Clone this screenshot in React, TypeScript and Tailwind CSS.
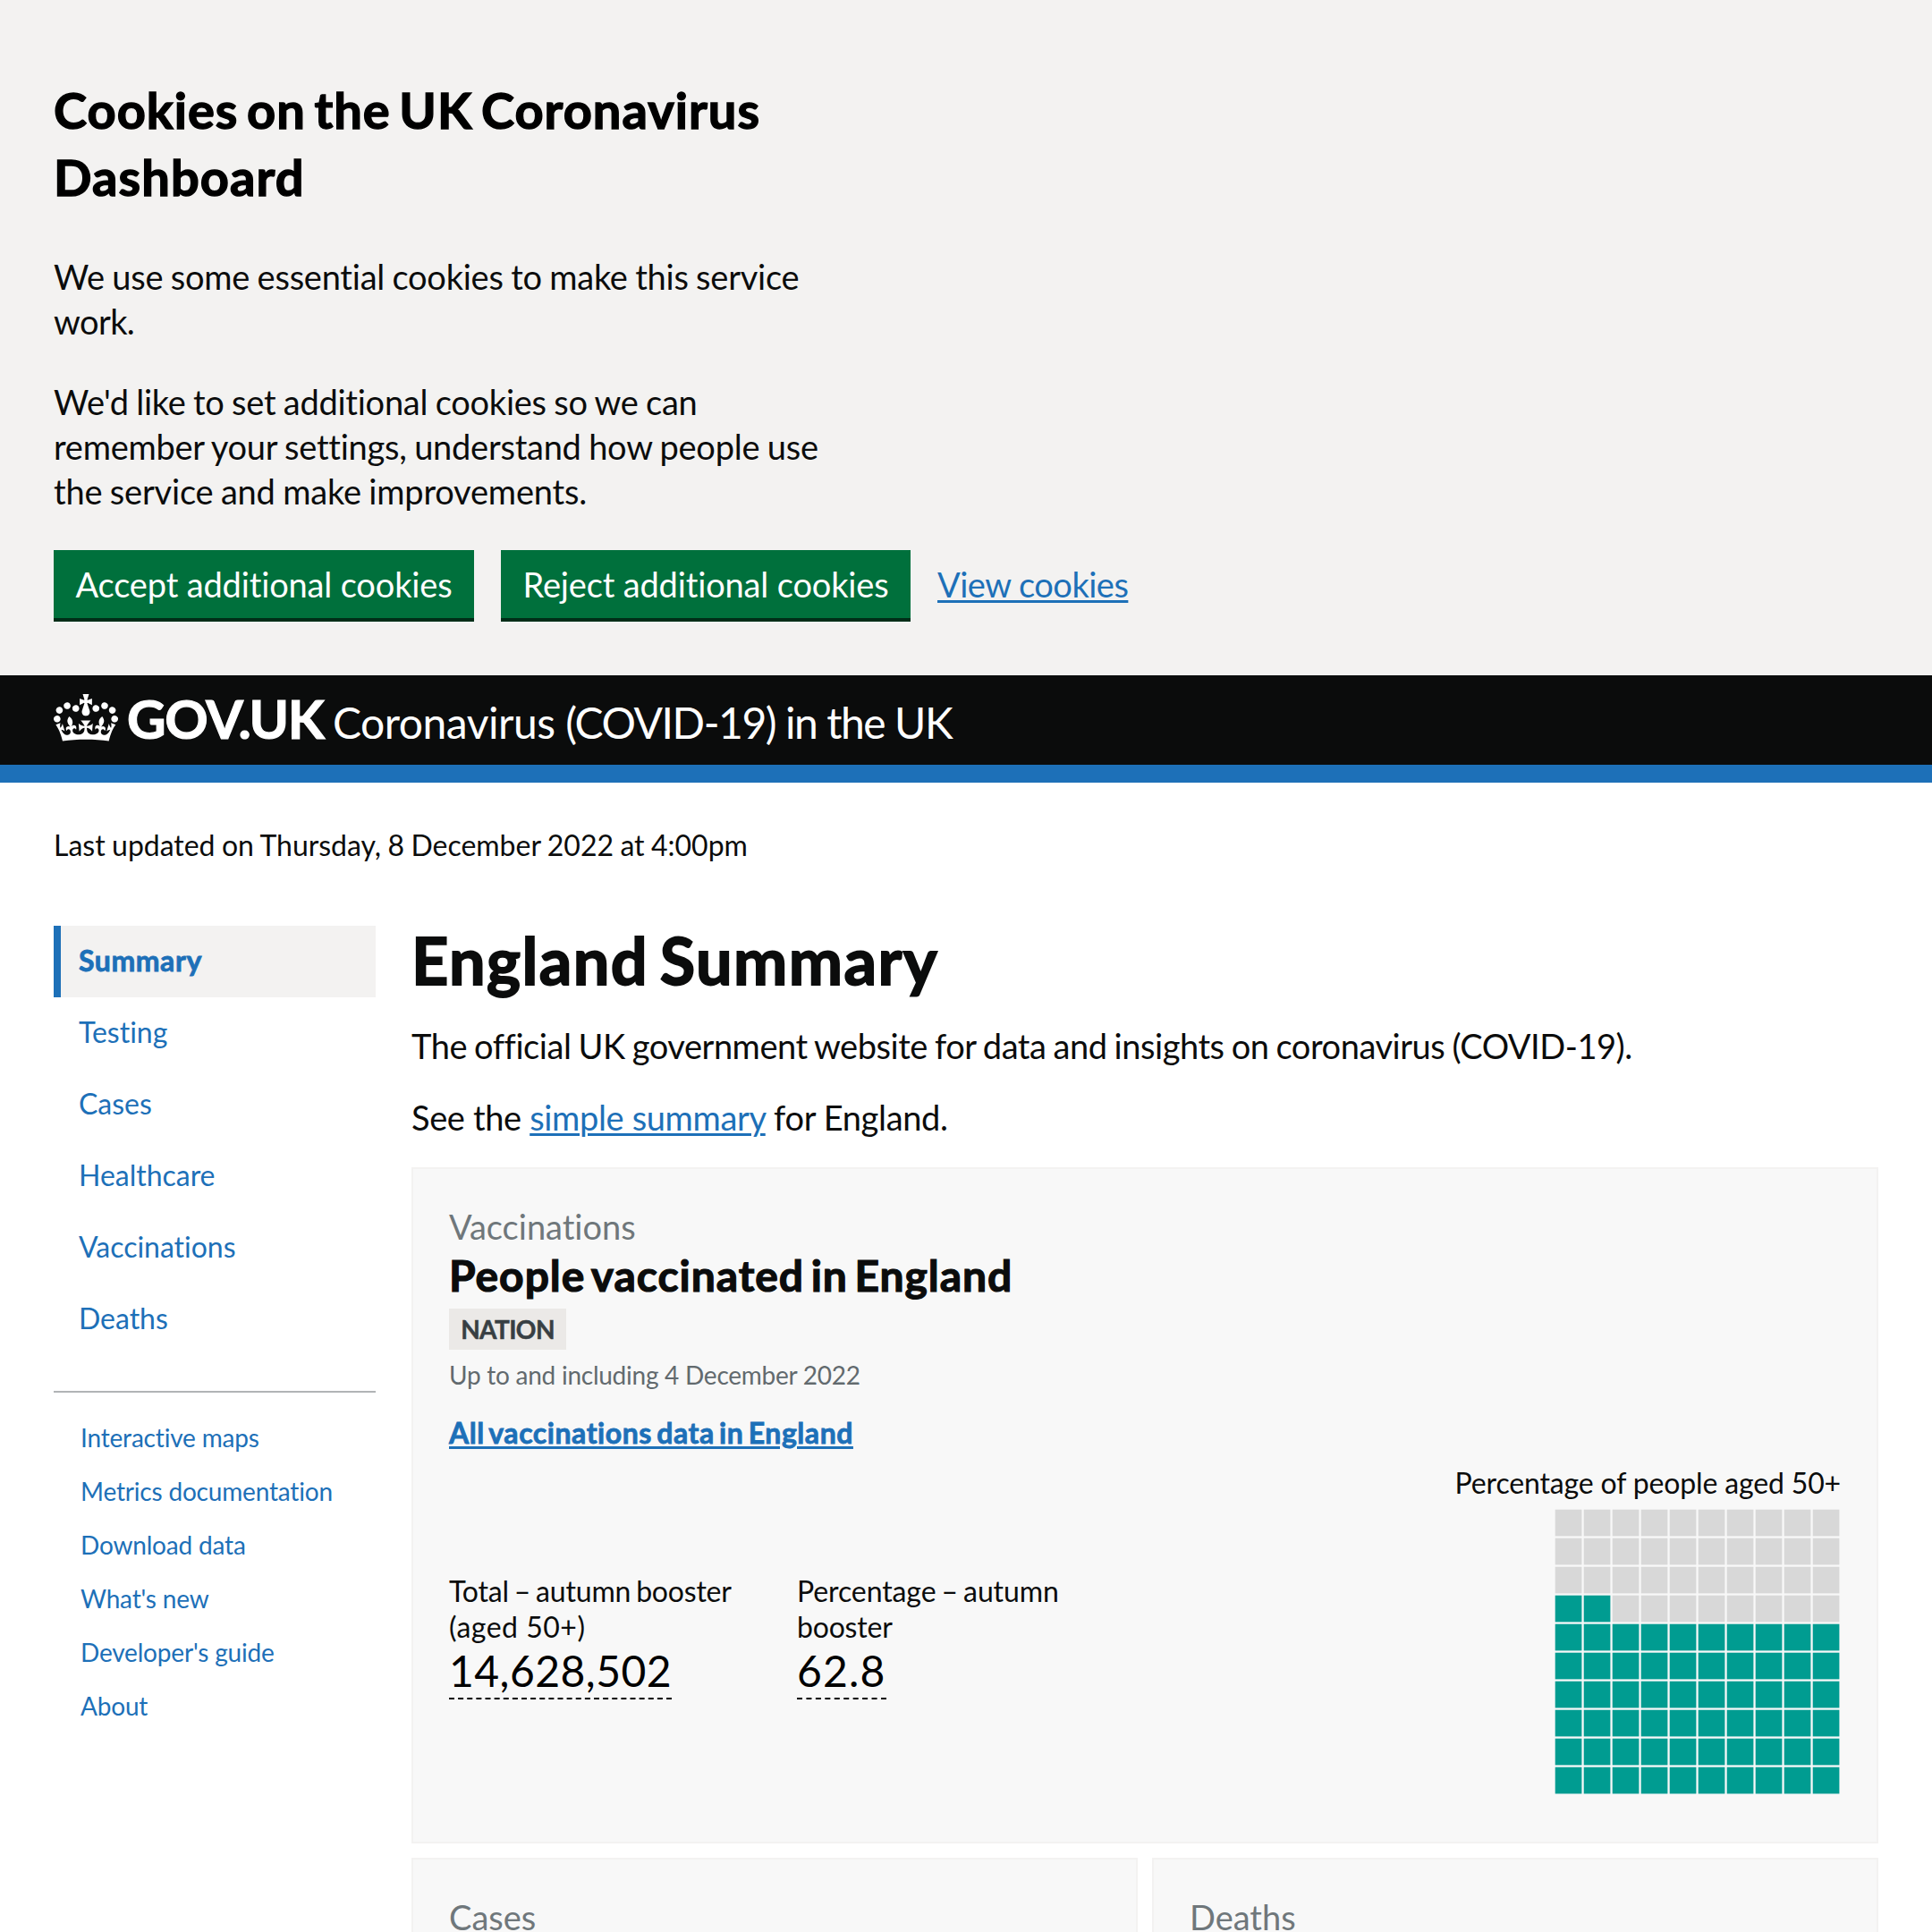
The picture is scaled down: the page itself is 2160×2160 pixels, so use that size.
import React from 'react'

const CROWN =
  'M25 30.2c3.5 1.5 7.7-.2 9.1-3.7 1.5-3.6-.2-7.8-3.9-9.2-3.6-1.4-7.6.3-9.1 3.9-1.4 3.5.3 7.5 3.9 9zM9 39.5c3.6 1.5 7.8-.2 9.2-3.7 1.5-3.6-.2-7.8-3.9-9.1-3.6-1.5-7.6.2-9.1 3.8-1.4 3.5.3 7.5 3.8 9zM4.4 57.2c3.5 1.5 7.7-.2 9.1-3.8 1.5-3.6-.2-7.7-3.9-9.1-3.5-1.5-7.6.3-9.1 3.8-1.4 3.5.3 7.6 3.9 9.1zm38.3-21.4c3.5 1.5 7.7-.2 9.1-3.8 1.5-3.6-.2-7.7-3.9-9.1-3.6-1.5-7.6.3-9.1 3.8-1.3 3.6.4 7.7 3.9 9.1zm64.4-5.6c-3.6 1.5-7.8-.2-9.1-3.7-1.5-3.6.2-7.8 3.8-9.2 3.6-1.4 7.7.3 9.2 3.9 1.3 3.5-.4 7.5-3.9 9zm15.9 9.3c-3.6 1.5-7.7-.2-9.1-3.7-1.5-3.6.2-7.8 3.7-9.1 3.6-1.5 7.7.2 9.2 3.8 1.5 3.5-.3 7.5-3.8 9zm4.7 17.7c-3.6 1.5-7.8-.2-9.2-3.8-1.5-3.6.2-7.7 3.9-9.1 3.6-1.5 7.7.3 9.2 3.8 1.3 3.5-.4 7.6-3.9 9.1zM89.3 35.8c-3.6 1.5-7.8-.2-9.2-3.8-1.4-3.6.2-7.7 3.9-9.1 3.6-1.5 7.7.3 9.2 3.8 1.4 3.6-.3 7.7-3.9 9.1zM69.7 17.7l8.9 4.7V9.3l-8.9 2.8c-.2-.3-.5-.6-.9-.9L72.4 0H59.6l3.5 11.2c-.3.3-.6.5-.9.9l-8.8-2.8v13.1l8.8-4.7c.3.3.6.7.9.9l-5 15.4v.1c-.2.8-.4 1.6-.4 2.4 0 4.1 3.1 7.5 7 8.1h.2c.3 0 .7.1 1 .1.4 0 .7 0 1-.1h.2c4-.6 7.1-4.1 7.1-8.1 0-.8-.1-1.7-.4-2.4V34l-5.1-15.4c.4-.2.7-.6 1-.9zM66 92.8c16.9 0 32.8 1.1 47.1 3.2 4-16.9 8.9-26.7 14-33.5l-9.6-3.4c1 4.9 1.1 7.2 0 10.2-1.5-1.4-3-4.3-4.2-8.7L108.6 76c2.8-2 5-3.2 7.5-3.3-4.4 9.4-10 11.9-13.6 11.2-4.3-.8-6.3-4.6-5.6-7.9 1-4.7 5.7-5.9 8-.5 4.3-8.7-3-11.4-7.6-8.8 7.1-7.2 7.9-13.5 2.1-21.1-8 6.1-8.1 12.3-4.5 20.8-4.7-5.4-12.1-2.5-9.5 6.2 3.4-5.2 7.9-2 7.2 3.1-.6 4.3-6.4 7.8-13.5 7.2-10.3-.9-10.9-8-11.2-13.8 2.5-.5 7.1 1.8 11 7.3L80.2 60c-4.1 4.4-8 5.3-12.3 5.4 1.4-4.4 8-11.6 8-11.6H55.5s6.4 7.2 7.9 11.6c-4.2-.1-8-1-12.3-5.4l1.4 16.4c3.9-5.5 8.5-7.7 10.9-7.3-.3 5.8-.9 12.8-11.1 13.8-7.2.6-12.9-2.9-13.5-7.2-.7-5 3.8-8.3 7.1-3.1 2.7-8.7-4.6-11.6-9.4-6.2 3.7-8.5 3.6-14.7-4.6-20.8-5.8 7.6-5 13.9 2.2 21.1-4.7-2.6-11.9.1-7.7 8.8 2.3-5.5 7.1-4.2 8.1.5.7 3.3-1.3 7.1-5.7 7.9-3.5.7-9-1.8-13.5-11.2 2.5.1 4.7 1.3 7.5 3.3l-4.7-15.4c-1.2 4.4-2.7 7.2-4.3 8.7-1.1-3-.9-5.3 0-10.2l-9.5 3.4c5 6.9 9.9 16.7 14 33.5 14.8-2.1 30.8-3.2 47.7-3.2z'

function CookieBanner() {
  return (
    <section className="h-[755px] bg-[#f3f2f1] px-[60px] pt-[85px]">
      <h2 className="text-[56px] leading-[75px] font-bold text-black [-webkit-text-stroke:1.4px]">
        <span className="block tracking-[1px] [word-spacing:-5px]">Cookies on the UK Coronavirus</span>
        <span className="block tracking-[1.1px]">Dashboard</span>
      </h2>
      <p className="mt-[49px] text-[38px] leading-[50px]">
        <span className="block tracking-[-0.24px] [word-spacing:-1px]">We use some essential cookies to make this service</span>
        <span className="block tracking-[-0.6px]">work.</span>
      </p>
      <p className="mt-10 text-[38px] leading-[50px]">
        <span className="block tracking-[-0.25px] [word-spacing:-1px]">We'd like to set additional cookies so we can</span>
        <span className="block tracking-[-0.24px] [word-spacing:-1px]">remember your settings, understand how people use</span>
        <span className="block tracking-[-0.2px] [word-spacing:-1px]">the service and make improvements.</span>
      </p>
      <div className="mt-[41px] flex gap-[30px] text-[38px] leading-[50px] whitespace-nowrap text-white">
        <button className="h-20 w-[470px] border-b-4 border-[#002d18] bg-[#00703c] pt-[13px] pb-[13px] tracking-[-0.15px]">
          Accept additional cookies
        </button>
        <button className="h-20 w-[458px] border-b-4 border-[#002d18] bg-[#00703c] pt-[13px] pb-[13px] tracking-[-0.15px]">
          Reject additional cookies
        </button>
        <a className="pt-[13px] tracking-[-0.5px] text-[#1d70b8] underline decoration-[3px] underline-offset-[3px]">View cookies</a>
      </div>
    </section>
  )
}

function Header() {
  return (
    <header className="flex h-[120px] items-start border-b-[20px] border-[#1d70b8] bg-[#0b0c0c] pl-[60px] leading-[60px] whitespace-nowrap text-white">
      <svg className="mt-[21px] h-[53px] w-[72px]" viewBox="0 0 132 97" fill="currentColor">
        <path fillRule="evenodd" d={CROWN} />
      </svg>
      <span className="mt-[18px] ml-[10px] w-[230px] text-[60px] font-bold tracking-[-1.2px] [-webkit-text-stroke:1.2px]">GOV.UK</span>
      <span className="mt-[23px] text-[48px] tracking-[-1.45px]">
        <span className="tracking-[-0.5px]">Coronavirus </span>(COVID-19) in the UK
      </span>
    </header>
  )
}

const navItems = ['Summary', 'Testing', 'Cases', 'Healthcare', 'Vaccinations', 'Deaths']
const subItems = ['Interactive maps', 'Metrics documentation', 'Download data', "What's new", "Developer's guide", 'About']

function Sidebar() {
  return (
    <aside className="w-[360px] text-[#1d70b8]">
      <nav className="text-[32px] leading-10">
        {navItems.map((item, i) => (
          <a
            key={item}
            className={
              i === 0
                ? 'block h-20 border-l-8 border-[#1d70b8] bg-[#f3f2f1] pt-[19px] pl-5 font-bold tracking-[0.55px] [-webkit-text-stroke:0.8px]'
                : 'block h-20 pt-[19px] pl-7 tracking-[-0.02px]'
            }
          >
            {item}
          </a>
        ))}
      </nav>
      <hr className="mt-10 border-t-2 border-[#b1b4b6]" />
      <nav className="mt-5 pl-[30px] text-[28px] leading-[60px] tracking-[-0.18px]">
        {subItems.map((item) => (
          <a key={item} className="block">
            {item}
          </a>
        ))}
      </nav>
    </aside>
  )
}

function Card({ className, title, children }: { className: string; title: string; children?: React.ReactNode }) {
  return (
    <section className={'border-2 border-[#f3f2f1] bg-[#f8f8f8] px-10 pt-[39px] ' + className}>
      <p className="text-[38px] leading-[50px] text-[#6f777b]">{title}</p>
      {children}
    </section>
  )
}

function Waffle({ filled }: { filled: number }) {
  return (
    <svg className="mt-[9px] h-[319px] w-[320px]" viewBox="0 0 320 319">
      {Array.from({ length: 100 }, (_, i) => {
        const col = i % 10
        const rowFromBottom = 9 - Math.floor(i / 10)
        const on = rowFromBottom * 10 + col < filled
        return (
          <rect
            key={i}
            x={0.7 + col * 32}
            y={0.7 + Math.floor(i / 10) * 32}
            width="29.7"
            height="29.7"
            fill={on ? '#009c91' : '#d8d8d8'}
          />
        )
      })}
    </svg>
  )
}

export default function App() {
  return (
    <div className="h-[2160px] w-[2160px] overflow-hidden bg-white font-['Lato',sans-serif] text-[#0b0c0c] [font-variant-ligatures:none]">
      <CookieBanner />
      <Header />
      <p className="mt-12 px-[60px] pt-0.5 text-[32px] leading-10 tracking-[-0.02px] [word-spacing:-0.7px]">
        Last updated on Thursday, 8 December 2022 at 4:00pm
      </p>
      <div className="mt-[70px] flex gap-10 px-[60px]">
        <Sidebar />
        <main className="w-[1640px]">
          <h1 className="-mt-0.5 text-[72px] leading-[80px] font-bold tracking-[1.4px] [-webkit-text-stroke:1.8px] [word-spacing:-6px]">
            England Summary
          </h1>
          <p className="mt-[31px] text-[38px] leading-[50px] tracking-[-0.46px] whitespace-nowrap [word-spacing:-1.2px]">
            The official UK government website for data and insights on coronavirus (COVID-19).
          </p>
          <p className="mt-[30px] text-[38px] leading-[50px] tracking-[-0.35px]">
            See the{' '}
            <a className="text-[#1d70b8] underline decoration-[3px] underline-offset-[3px]">simple summary</a> for England.
          </p>
          <Card className="mt-[31px] h-[756px]" title="Vaccinations">
            <h2 className="text-[48px] leading-[60px] font-bold tracking-[0.95px] [-webkit-text-stroke:1.2px] [word-spacing:-5px]">
              People vaccinated in England
            </h2>
            <span className="mt-[7px] block h-[46px] w-[131px] bg-[#ebe9e7] text-center text-[28px] leading-[46px] font-bold tracking-[-0.6px] text-[#383f43] [-webkit-text-stroke:0.5px]">
              NATION
            </span>
            <p className="mt-2 text-[28px] leading-10 tracking-[-0.25px] text-[#626a6e]">Up to and including 4 December 2022</p>
            <p className="mt-[25px] text-[32px] leading-10 font-bold tracking-[0.55px] [-webkit-text-stroke:0.8px] [word-spacing:-3px]">
              <a className="text-[#1d70b8] underline decoration-[3px] underline-offset-[3px]">All vaccinations data in England</a>
            </p>
            <div className="mt-4 flex text-[32px] leading-10">
              <div className="w-[389px] pt-[121px]">
                <p className="tracking-[-0.2px] [word-spacing:-2px]">Total – autumn booster</p>
                <p className="tracking-[0.5px]">(aged 50+)</p>
                <span className="-mt-px inline-block border-b-2 border-dashed border-black text-[48px] leading-[60px] tracking-[0.45px] text-black">
                  14,628,502
                </span>
              </div>
              <div className="pt-[121px]">
                <p className="tracking-[-0.1px] [word-spacing:-2px]">Percentage – autumn</p>
                <p className="tracking-[-0.2px]">booster</p>
                <span className="-mt-px inline-block border-b-2 border-dashed border-black text-[48px] leading-[60px] tracking-[1.2px] text-black">
                  62.8
                </span>
              </div>
              <div className="ml-auto flex flex-col items-end">
                <p className="tracking-[-0.15px]">Percentage of people aged 50+</p>
                <Waffle filled={62} />
              </div>
            </div>
          </Card>
          <div className="mt-4 grid grid-cols-2 gap-4">
            <Card className="h-[300px]" title="Cases" />
            <Card className="h-[300px]" title="Deaths" />
          </div>
        </main>
      </div>
    </div>
  )
}
